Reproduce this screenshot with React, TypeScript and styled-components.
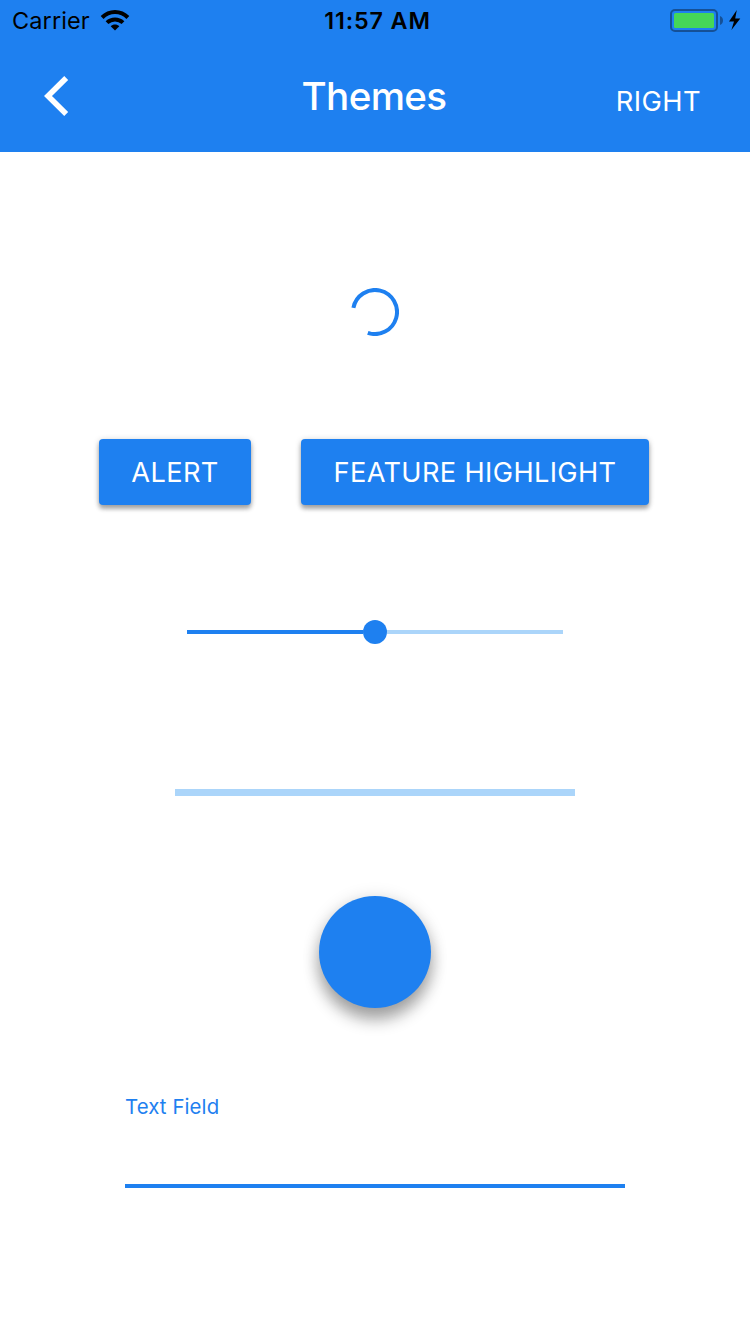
import React from 'react';
import styled, { createGlobalStyle } from 'styled-components';

const blue = '#1e80f0';
const lightBlue = '#abd5fa';

const GlobalStyle = createGlobalStyle`
  * { box-sizing: border-box; }
  body { margin: 0; background: #fff; font-family: Inter, "Liberation Sans", sans-serif; }
  button, input { font: inherit; border: 0; padding: 0; }
`;

const Screen = styled.div`
  width: 750px;
  height: 1334px;
  overflow: hidden;
  display: flex;
  flex-direction: column;
  background: #fff;
`;

const Header = styled.header`
  height: 152px;
  flex: none;
  background: ${blue};
`;

const StatusBar = styled.div`
  height: 40px;
  display: grid;
  grid-template-columns: 1fr auto 1fr;
  align-items: center;
  padding: 0 9px 0 12px;
  color: #000;
`;

const StatusGroup = styled.div<{ $end?: boolean }>`
  display: flex;
  align-items: center;
  gap: 10px;
  height: 40px;
  padding-top: ${p => (p.$end ? 0 : 2)}px;
  justify-content: ${p => (p.$end ? 'flex-end' : 'flex-start')};
  svg { display: block; }
`;

const Label = styled.span<{ $size: number; $weight?: number; $spacing?: number }>`
  font-size: ${p => p.$size}px;
  font-weight: ${p => p.$weight ?? 400};
  letter-spacing: ${p => p.$spacing ?? 0}px;
  line-height: 40px;
  white-space: nowrap;
`;

const Clock = styled(Label)`
  line-height: 38px;
  padding: 2px 0 0 2px;
`;

const NavBar = styled.nav`
  height: 112px;
  display: grid;
  grid-template-columns: 1fr auto 1fr;
  align-items: center;
  padding: 0 49px 0 43px;
  color: #fff;
`;

const NavButton = styled.button<{ $end?: boolean }>`
  background: none;
  color: #fff;
  justify-self: ${p => (p.$end ? 'end' : 'start')};
  padding-top: ${p => (p.$end ? 11 : 0)}px;
  svg { display: block; }
`;

const Title = styled.h1`
  margin: 0;
  padding: 0 0 1px 4px;
  font-size: 38.6px;
  line-height: 48px;
  font-weight: 500;
  letter-spacing: -0.65px;
`;

const Content = styled.main`
  display: flex;
  flex-direction: column;
  align-items: center;
`;

const Spinner = styled.svg`
  display: block;
  margin-top: 136px;
`;

const ButtonRow = styled.div`
  display: flex;
  gap: 50px;
  margin-top: 103px;
  margin-right: 2px;
`;

const RaisedButton = styled.button<{ $width: number }>`
  width: ${p => p.$width}px;
  height: 66px;
  padding-top: 2px;
  border-radius: 4px;
  background: ${blue};
  color: #fff;
  box-shadow: 0 4px 4px rgba(0, 0, 0, 0.28), 0 1px 6px rgba(0, 0, 0, 0.2);
`;

const Slider = styled.div`
  display: flex;
  align-items: center;
  width: 376px;
  height: 24px;
  margin-top: 115px;
`;

const Track = styled.div<{ $filled?: boolean }>`
  flex: 1;
  height: 4px;
  background: ${p => (p.$filled ? blue : lightBlue)};
`;

const Thumb = styled.div`
  width: 24px;
  height: 24px;
  border-radius: 50%;
  background: ${blue};
`;

const Progress = styled.div`
  width: 400px;
  height: 7px;
  margin-top: 145px;
  background: ${lightBlue};
`;

const FloatingButton = styled.button`
  width: 112px;
  height: 112px;
  margin-top: 100px;
  border-radius: 50%;
  background: ${blue};
  box-shadow: 0 12px 16px rgba(0, 0, 0, 0.32), 0 2px 18px rgba(0, 0, 0, 0.14);
`;

const Field = styled.label`
  display: flex;
  flex-direction: column;
  width: 500px;
  margin-top: 79px;
  color: ${blue};
`;

const FieldInput = styled.input`
  height: 61px;
  background: transparent;
  outline: none;
  border-bottom: 4px solid ${blue};
`;

const WifiIcon = () => (
  <svg width="30" height="22" viewBox="0 0 30 22" fill="none" stroke="#000">
    <path d="M2.1 7.5C9.3 0.2 20.7 0.2 27.9 7.5" strokeWidth="4" />
    <path d="M7 12.6C11.6 8.3 18.4 8.3 23 12.6" strokeWidth="4" />
    <path d="M15 20.4L10.7 16.2C13 13.8 17 13.8 19.3 16.2Z" fill="#000" stroke="none" />
  </svg>
);

const BatteryIcon = () => (
  <svg width="72" height="24" viewBox="0 0 72 24">
    <rect x="2" y="2" width="46" height="21" rx="4" fill="none" stroke="#155096" strokeWidth="2" />
    <rect x="5" y="5" width="40" height="15" rx="1.5" fill="#45d658" />
    <path d="M51 8Q54 9.2 54 12.5T51 17Z" fill="#155096" />
    <path d="M67.8 2L60 13.4H65L62.4 22L71.3 10.4H66.2Z" fill="#000" />
  </svg>
);

export default function App() {
  return (
    <>
      <GlobalStyle />
      <Screen>
        <Header>
          <StatusBar>
            <StatusGroup>
              <Label $size={23.5} $spacing={0.1}>Carrier</Label>
              <WifiIcon />
            </StatusGroup>
            <Clock $size={23.3} $weight={600} $spacing={0.9}>11:57 AM</Clock>
            <StatusGroup $end>
              <BatteryIcon />
            </StatusGroup>
          </StatusBar>
          <NavBar>
            <NavButton aria-label="Back">
              <svg width="26" height="42" viewBox="0 0 26 42" fill="none" stroke="#fff" strokeWidth="5.6">
                <path d="M23.2 3L5 21L23.2 39" />
              </svg>
            </NavButton>
            <Title>Themes</Title>
            <NavButton $end><Label $size={27.3} $spacing={0.4}>RIGHT</Label></NavButton>
          </NavBar>
        </Header>
        <Content>
          <Spinner width="48" height="48" viewBox="0 0 48 48">
            <path d="M2.4 19.8A22 22 0 1 1 16.8 44.8" fill="none" stroke={blue} strokeWidth="4" />
          </Spinner>
          <ButtonRow>
            <RaisedButton $width={152}><Label $size={27.2} $spacing={0.36}>ALERT</Label></RaisedButton>
            <RaisedButton $width={348}><Label $size={27.2} $spacing={0.36}>FEATURE HIGHLIGHT</Label></RaisedButton>
          </ButtonRow>
          <Slider>
            <Track $filled />
            <Thumb />
            <Track />
          </Slider>
          <Progress />
          <FloatingButton aria-label="Action" />
          <Field>
            <Label $size={20.4} $spacing={0.1}>Text Field</Label>
            <FieldInput />
          </Field>
        </Content>
      </Screen>
    </>
  );
}
